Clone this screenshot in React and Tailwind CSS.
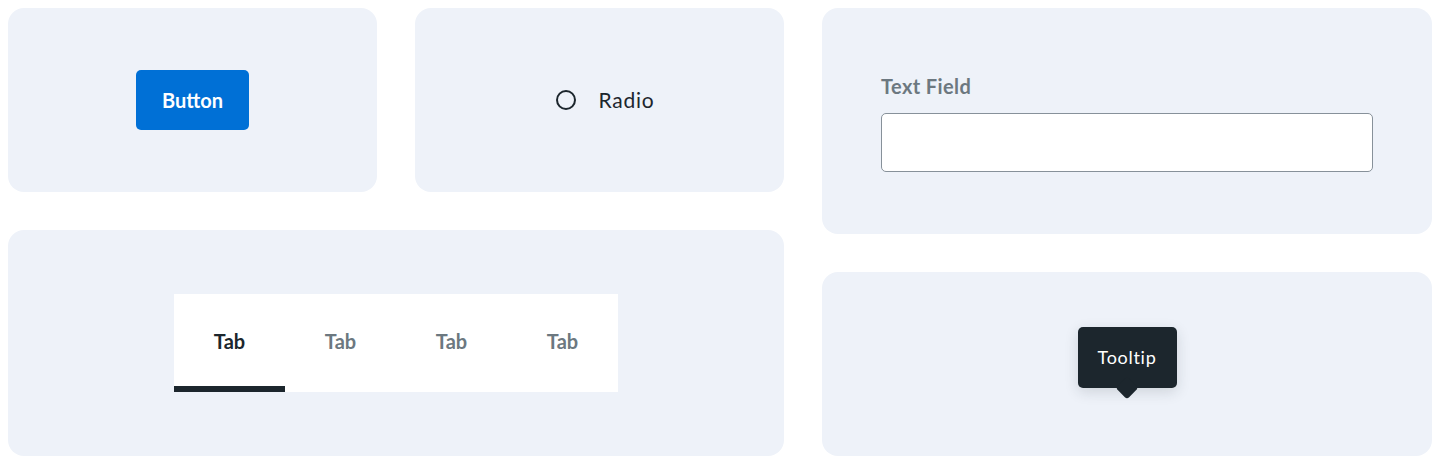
const font = { fontFamily: 'Lato, "Noto Sans", sans-serif' };

function Card({ className = '', children }) {
  return (
    <div className={`flex items-center justify-center rounded-2xl bg-[#eef2f9] ${className}`}>
      {children}
    </div>
  );
}

const tabs = ['Tab', 'Tab', 'Tab', 'Tab'];

export default function App() {
  return (
    <div className="flex gap-[38px] bg-white px-2 pt-2 pb-[7px]" style={font}>
      <div className="flex w-[776px] flex-col gap-[38px]">
        <div className="flex gap-[38px]">
          <Card className="h-[184px] w-[369px]">
            <button className="h-[60px] w-[113px] rounded-[5px] bg-[#0070d6] text-[20px] font-bold text-white">
              Button
            </button>
          </Card>
          <Card className="h-[184px] w-[369px]">
            <label className="ml-3 flex items-center gap-[22px] text-[21px] text-[#1c262d]">
              <span className="h-5 w-5 rounded-full border-2 border-[#1c262d]" />
              <span className="tracking-[0.8px]">Radio</span>
            </label>
          </Card>
        </div>
        <Card className="h-[226px]">
          <div className="flex h-[98px] w-[444px] bg-white">
            {tabs.map((t, i) => (
              <div
                key={i}
                className={`flex w-[111px] items-center justify-center border-b-[6px] pt-[2px] text-[20px] font-bold ${
                  i === 0 ? 'border-[#1c262d] text-[#1c262d]' : 'border-transparent text-[#6c7880]'
                }`}
              >
                {t}
              </div>
            ))}
          </div>
        </Card>
      </div>
      <div className="flex flex-1 flex-col gap-[38px]">
        <Card className="h-[226px] flex-col items-stretch px-[59px]">
          <div className="pt-[3px] text-[20px] font-bold leading-6 tracking-[0.4px] text-[#6c7880]">Text Field</div>
          <div className="mt-[15px] h-[59px] rounded-[5px] border border-[#87919a] bg-white" />
        </Card>
        <Card className="h-[184px]">
          <div className="relative mb-[13px]">
            <div className="flex h-[61px] w-[99px] items-center justify-center rounded-[5px] bg-[#1c262d] text-[18px] tracking-[0.7px] text-white shadow-[0_4px_14px_rgba(30,40,50,0.15)]">
              Tooltip
            </div>
            <div className="absolute -bottom-[8px] left-1/2 h-4 w-4 -translate-x-1/2 rotate-45 rounded-[3px] bg-[#1c262d]" />
          </div>
        </Card>
      </div>
    </div>
  );
}
